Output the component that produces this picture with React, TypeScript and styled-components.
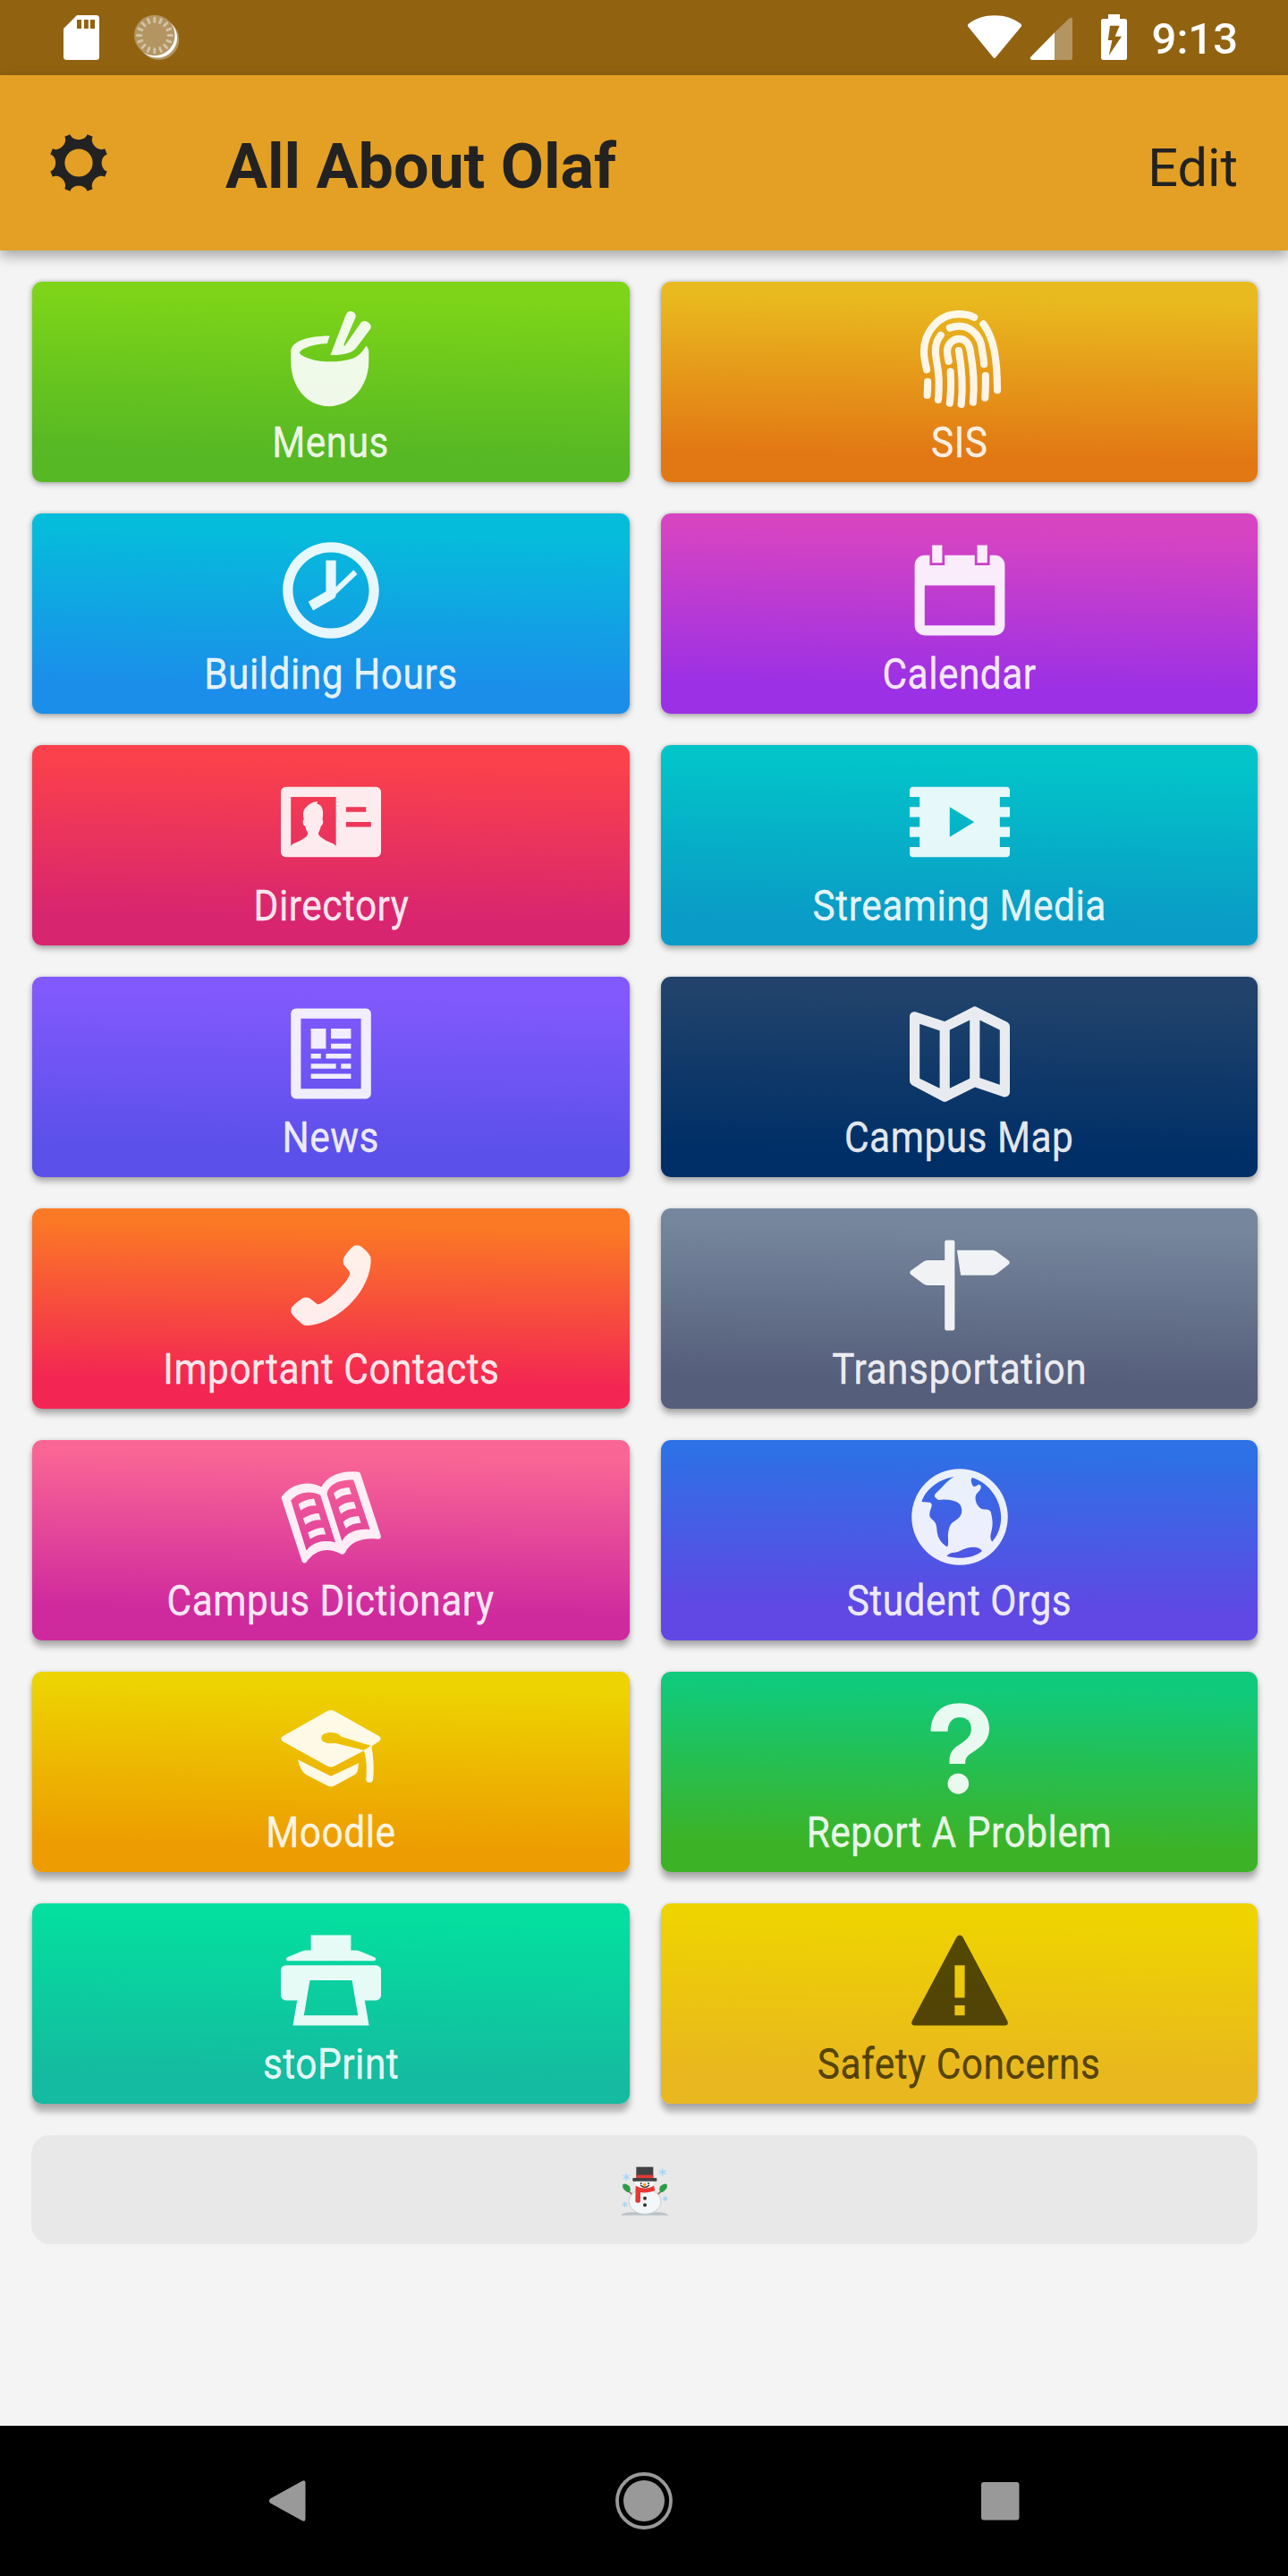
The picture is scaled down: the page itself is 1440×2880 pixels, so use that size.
import React from 'react';
import styled, { createGlobalStyle } from 'styled-components';

const GlobalStyle = createGlobalStyle`
  *, *::before, *::after { box-sizing: border-box; }
  body { margin: 0; background: #f4f4f4; font-family: Roboto, "Liberation Sans", sans-serif; }
`;

const Screen = styled.div`
  display: flex;
  flex-direction: column;
  width: 1440px;
  height: 2880px;
  overflow: hidden;
  background: #f4f4f4;
`;

const StatusBar = styled.div`
  display: flex;
  justify-content: space-between;
  flex: none;
  height: 84px;
  padding: 0 56px 0 70px;
  background: #916311;
  color: #fff;
`;

const StatusGroup = styled.div`
  display: flex;
  align-items: flex-start;
`;

const StatusIcon = styled.svg<{ $before?: number }>`
  display: block;
  flex: none;
  margin-top: 16px;
  margin-left: ${(p) => p.$before ?? 0}px;
`;

const Clock = styled.span`
  margin-left: 27px;
  margin-top: 15px;
  font-size: 49px;
  line-height: 58px;
  font-weight: 500;
`;

const Header = styled.header`
  display: flex;
  align-items: center;
  flex: none;
  height: 196px;
  padding: 0 56px 0 55px;
  background: #e4a024;
  color: #222;
  box-shadow: 0 6px 14px rgba(0, 0, 0, 0.33);
  z-index: 1;
`;

const GearIcon = styled.svg`
  display: block;
  flex: none;
  margin-bottom: 1px;
`;

const Title = styled.h1`
  flex: 1;
  margin: 8px 0 0 131px;
  font-size: 70px;
  line-height: 82px;
  font-weight: 700;
`;

const EditButton = styled.button`
  margin: 11px 0 0;
  padding: 0;
  border: 0;
  background: none;
  color: #222;
  font-family: inherit;
  font-size: 59.5px;
  line-height: 70px;
`;

const Content = styled.main`
  display: flex;
  flex-direction: column;
  gap: 35px;
  flex: 1;
  padding: 35px 34px 0 36px;
`;

const Grid = styled.div`
  display: grid;
  grid-template-columns: 668px 667px;
  grid-auto-rows: 224px;
  gap: 35px;
`;

const Tile = styled.button<{ $from: string; $to: string; $drop: number; $dark?: boolean }>`
  display: flex;
  flex-direction: column;
  align-items: center;
  padding: 30px 0 0;
  border: 0;
  border-radius: 11px;
  background: linear-gradient(181deg, ${(p) => p.$from} 10%, ${(p) => p.$to} 85%);
  box-shadow: 0 ${(p) => p.$drop}px 7px rgba(0, 0, 0, 0.28), 0 0 5px rgba(0, 0, 0, 0.14);
  color: ${(p) => (p.$dark ? 'rgba(0, 0, 0, 0.65)' : 'rgba(255, 255, 255, 0.9)')};
  font-family: inherit;
`;

const TileIcon = styled.svg`
  display: block;
  flex: none;
  fill: currentColor;
`;

const TileLabel = styled.span`
  margin-top: 9px;
  font-size: 49px;
  line-height: 58px;
  letter-spacing: 0.6px;
  white-space: nowrap;
  transform: scaleX(0.865);
  -webkit-text-stroke: 0.35px currentColor;
`;

const SnowButton = styled.button`
  display: flex;
  justify-content: center;
  align-items: center;
  height: 122px;
  margin-left: -1px;
  padding: 4px 0 0;
  border: 0;
  border-radius: 21px;
  background: #e8e8e8;
`;

const NavBar = styled.nav`
  display: flex;
  justify-content: center;
  align-items: center;
  gap: 334px;
  flex: none;
  height: 168px;
  padding-right: 1px;
  background: #000;
`;

const NavIcon = styled.svg`
  display: block;
  fill: #999;
`;

const polar = (r: number, deg: number) => {
  const a = (deg * Math.PI) / 180;
  return `${(r * Math.sin(a)).toFixed(2)} ${(-r * Math.cos(a)).toFixed(2)}`;
};

const gearPath = () => {
  let d = '';
  for (let k = 0; k < 8; k += 1) {
    const a = k * 45;
    d += `${k === 0 ? 'M' : 'L'}${polar(33.1, a - 16.8)}`;
    d += `C${polar(24.7, a - 16)} ${polar(24.7, a + 16)} ${polar(33.1, a + 16.8)}`;
  }
  return `${d}ZM0 -15.6A15.6 15.6 0 1 0 0 15.6A15.6 15.6 0 1 0 0 -15.6Z`;
};

const icons: Record<string, React.ReactNode> = {
  bowl: (
    <>
      <path d="M9.75 5.45C5 5.5 2 6.6 2 8.6V10.5C2 15.4 5 19.5 9.6 19.5S17.55 15.4 17.55 10.5V8.6Q17.5 7.9 17.05 7.4C16 9.1 15.2 9.6 14.2 10C12.9 10.4 11.5 10.6 9.7 10.6C6.3 10.6 3.75 9.4 3.75 8.8S6 7.05 9.25 6.95Z" />
      <path d="M9.9 9.3L13 1.2C13.3.4 14 .4 14.5.7Q15.1 1.1 14.9 1.8L12.6 7.1L12.65 7.6L15.8 3.1C16.2 2.3 17.1 2.4 17.6 2.9Q18.2 3.4 17.9 4L15.3 7.5C14.4 8.8 13 9.3 9.9 9.3Z" />
    </>
  ),
  fingerprint: (
    <g fill="none" stroke="currentColor" strokeWidth="1.45" strokeLinecap="round">
      <path d="M12.9 1.75C11.9 1.25 10.8 1.1 9.8 1.1C5.5 1.1 2.85 5 2.85 8.6C2.85 10.2 3.3 11.4 3.4 12.2" />
      <path d="M3.6 14.6Q3.62 16 3.5 17.3" />
      <path d="M14.7 3.1C16.8 5.8 17.5 10 17.5 16.3" />
      <path d="M6.2 5.3C5.5 6.2 5.15 7.3 5.15 8.4C5.15 10.2 5.85 12 5.85 14.8Q5.85 16.8 5.7 18.2" />
      <path d="M8 3.85C11.7 2.6 14.3 5.2 14.5 8.5Q14.8 10 14.85 11.1" />
      <path d="M15.15 13.4Q15.2 15.6 15.05 17.8" />
      <path d="M7.8 10.5C7.6 9.6 7.5 9.1 7.5 8.5C7.5 7.1 8.6 6.05 9.85 6.05C11.2 6.05 11.9 7.1 12.1 8.4C12.9 12.7 12.95 15.8 12.65 18.7" />
      <path d="M8.15 12.6Q8.35 16 8 18.9" />
      <path d="M9.8 8.4C10.5 12.3 10.7 15.5 10.3 19.1" />
    </g>
  ),
  clock: (
    <path d="M10 .4c-5.303 0-9.601 4.298-9.601 9.6 0 5.303 4.298 9.601 9.601 9.601 5.302 0 9.6-4.298 9.6-9.601C19.6 4.698 15.301.4 10 .4zm0 17.199c-4.197 0-7.6-3.402-7.6-7.6 0-4.197 3.402-7.6 7.6-7.6 4.197 0 7.601 3.402 7.601 7.6 0 4.198-3.404 7.6-7.601 7.6zM11 9.33V4H9v6.245l-3.546 2.048 1 1.732 4.115-2.377A.955.955 0 0 0 11 10.964v-.168l4.24-4c-.217-.309-.457-.6-.725-.869L11 9.33z" />
  ),
  calendar: (
    <path
      fillRule="evenodd"
      d="M1 5A2 2 0 0 1 3 3H4V5H7V3H13V5H16V3H17A2 2 0 0 1 19 5V17A2 2 0 0 1 17 19H3A2 2 0 0 1 1 17ZM3 9V17H17V9ZM4.5 1H6.5V4.5H4.5ZM13.5 1H15.5V4.5H13.5Z"
    />
  ),
  card: (
    <path
      fillRule="evenodd"
      d="M1 3H19A1 1 0 0 1 20 4V16A1 1 0 0 1 19 17H1A1 1 0 0 1 0 16V4A1 1 0 0 1 1 3ZM2 5V14.8C2.3 14.3 3.1 14.1 3.9 13.7C4.8 13.2 5.5 12.7 5.4 12.2C5.1 11.7 5 11.4 4.85 10.8C4.5 10.7 4.4 10.4 4.4 9.8L4.6 9.4C4.3 8.3 4.5 7.6 5 7.1C5.7 6.5 6.2 5.9 7.4 5.95L7.15 6.35C8 6.5 8.35 7.2 8.4 8Q8.45 8.7 8.3 9.5L8.45 9.8C8.45 10.3 8.3 10.6 8 10.8C7.85 11.5 7.75 11.7 7.5 12.2C7.4 12.7 8.2 13.2 9 13.7C9.8 14.1 10.7 14.3 11 14.8V5ZM13 7V8H17V7ZM13 10V11H18V10Z"
    />
  ),
  video: (
    <path
      fillRule="evenodd"
      d="M.7 3H19.3A.7.7 0 0 1 20 3.7V5H18V7H20V9H18V11H20V13H18V15H20V16.3A.7.7 0 0 1 19.3 17H.7A.7.7 0 0 1 0 16.3V15H2V13H0V11H2V9H0V7H2V5H0V3.7A.7.7 0 0 1 .7 3ZM8 7V13L12.9 10Z"
    />
  ),
  news: (
    <path
      fillRule="evenodd"
      d="M3 1H17A1 1 0 0 1 18 2V18A1 1 0 0 1 17 19H3A1 1 0 0 1 2 18V2A1 1 0 0 1 3 1ZM4 3V17H16V3ZM6 5H9V9H6ZM10 5H14V7H10ZM10 8H14V9H10ZM6 10H8V11H6ZM9 10H14V11H9ZM6 12H11V13H6ZM12 12H14V13H12ZM6 14H14V15H6Z"
    />
  ),
  map: (
    <path
      fillRule="evenodd"
      d="M0 2.6C0 1.9.6 1.5 1.3 1.7L7 3.55L12.5.75Q13 .4 13.5.75L19.5 3.7Q20 4 20 4.6V17.7C20 18.4 19.3 18.8 18.7 18.6L13.05 16.7L7.5 19.45Q7 19.75 6.5 19.45L.5 16.3Q0 16 0 15.5ZM2 4.05V14.95L6 16.9V5.4ZM8 5.25V16.9L12 14.95V3.3ZM14 3.3V14.8L18 16.2V5.25Z"
    />
  ),
  phone: (
    <path d="M14.6 2.1Q15.2 1.9 15.8 2.1C16.7 2.7 17.5 3.5 17.9 4.3C18.2 5.8 17.6 8.9 15.5 11.8C12.4 16 7.6 18.3 4.7 18Q4.2 17.8 3.8 17.3Q2.7 16.5 2.1 15.6Q1.9 15.2 2.15 14.4C2.8 13.7 3.6 13.1 4.3 12.6Q5 12.2 5.8 12.6L7.3 13.8C8.6 14 13.7 9.2 13.8 7.6C13.6 7 13 6.4 12.5 5.8Q12.3 5 12.6 4.4C13.1 3.6 13.8 2.7 14.6 2.1Z" />
  ),
  direction: (
    <path d="M7.4 1H8.6A.4.4 0 0 1 9 1.4V18.6A.4.4 0 0 1 8.6 19H7.4A.4.4 0 0 1 7 18.6V10H3.6Q3.1 10 2.7 9.7L.2 7.8Q-.1 7.45.2 7.1L2.7 5.3Q3.1 5 3.6 5H7V1.4A.4.4 0 0 1 7.4 1ZM9.45 3H16.5Q17 3 17.4 3.3L19.8 5.1Q20.1 5.45 19.8 5.8L17.4 7.7Q17 8 16.5 8H10.2Z" />
  ),
  book: (
    <path
      fillRule="evenodd"
      d="M.2 6.5Q0 6.2.2 5.9C2.3 3.2 5.6 2.7 8.1 4C9.1 1.9 12 .6 15.3 1Q15.8 1 15.95 1.5L19.98 13.8Q20 14.5 19.3 14.4C16.1 14.1 13.9 15 12.85 17.1Q12.4 17.7 11.9 17.3C9 15.8 6.6 16.8 5.1 19Q4.5 19.5 4.2 18.8ZM2 6.7L5.1 16.7C6.5 14.9 8.7 14.5 10.9 15.1L7.9 5.65C6 4.6 3.4 5 2 6.7ZM9.2 5.4L12.2 14.8C13.2 13 15.2 12.3 17.8 12.5L14.5 2.6C12 2.5 9.6 3.3 9.2 5.4ZM3.5 7.4Q5 6.4 6.65 6.4L7.05 7.75Q5.5 7.6 3.95 8.7ZM4.45 10.27Q5.95 9.27 7.6 9.27L8 10.62Q6.45 10.47 4.9 11.57ZM5.4 13.14Q6.9 12.14 8.55 12.14L8.95 13.49Q7.4 13.34 5.85 14.44ZM10.55 5.25Q11.8 4.1 13.65 4.1L14.1 5.45Q12.4 5.4 11.05 6.55ZM11.5 8.12Q12.75 6.97 14.6 6.97L15.05 8.32Q13.35 8.27 12 9.42ZM12.45 11Q13.7 9.84 15.55 9.84L16 11.19Q14.3 11.14 12.95 12.29Z"
    />
  ),
  globe: (
    <path
      fillRule="evenodd"
      d="M10 .4A9.6 9.6 0 1 1 10 19.6A9.6 9.6 0 1 1 10 .4ZM8.85 1.95C5.7 2.5 3.2 4.5 2.4 6.95L4 7.1Q4.6 7.3 4.35 8C3.9 9.3 3.8 9.9 4.4 10.4C5 10.9 5.3 11.2 5.4 12.2C5.5 14 6 15 7.5 16Q7.8 15.7 7.65 13.9C7.7 12.5 8 11.5 8.7 11C9.8 10.3 10.4 9.8 10.4 8.7C10.4 7.2 9.4 6.6 6.9 6.5L5.7 6.6L5.1 6.1Q4.8 5.7 5.3 5.2C6.4 4.2 7.3 2.9 8.85 1.95ZM12.5 2.15Q12.1 2.6 12.4 3.3C12.7 4.3 13.2 3.9 13.8 3.5Q14.4 3.7 14.2 4.3C14 5 13.4 5 13.15 5.9C13 7 13.7 8.5 15 8.5C15.8 8.5 16.2 8.7 16.3 9.4C16.8 11.4 16.4 12.5 16.15 13.7Q16.1 14.6 16.5 14.9C17.7 13.6 18.25 11.8 18.25 10.1C18.25 6.5 15.8 3.2 12.5 2.15ZM7.4 17.8C9.8 18.5 12.8 18.3 14.45 16.8Q14 15.9 12 16.05C10.4 16.3 10.3 17 8.4 17.15Q7.7 17.4 7.4 17.8Z"
    />
  ),
  cap: (
    <path
      fillRule="evenodd"
      d="M9.2 2.55Q10 2.1 10.8 2.55L19.6 7.5Q20.3 8 19.6 8.55L18.1 9.5C18.5 11.7 18.65 14 18.4 16.2Q18.2 16.8 17.7 16.8Q17.1 16.75 17 16.2C17.2 14 17.1 12 16.6 10.4L10.8 13.45Q10 13.9 9.2 13.45L.4 8.55Q-.3 8 .4 7.5ZM10 6.8C8.8 6.8 8.1 7.2 8.1 7.9C8.1 8.6 8.9 9.1 10.8 8.9L16.6 10.3L17.95 9.4L12 7.6Q11.4 6.8 10 6.8ZM3.4 12.2L10 15.5L15.5 12.9Q15.5 14.7 14.8 15.2L10.7 17.4Q10 17.8 9.3 17.4L5 15.2Q3.8 14.3 3.4 12.2Z"
    />
  ),
  help: (
    <path d="M4.2 6.55C4.3 3 6.4.95 9.95.95C13.5.95 15.9 3 15.9 5.95C15.9 7.7 15 9.1 13.5 10.1C12.1 11.1 11.1 11.4 11.1 12.9V13.05H7.95V12.3C8 10.5 8.9 9.8 10.2 9C11.6 8.1 12.3 7.4 12.3 6C12.3 4.6 11.4 3.75 10 3.75C8.5 3.75 7.65 4.8 7.6 6.55ZM9.7 14.95A2.1 2.05 0 1 1 9.7 19.05A2.1 2.05 0 1 1 9.7 14.95Z" />
  ),
  print: (
    <path
      fillRule="evenodd"
      d="M6 1H14V4H14.9Q15.4 4 15.8 4.2L18.6 5.35Q19 5.5 18.95 5.85Q18.9 6.1 18.6 6.1H1.4Q1.1 6.1 1.05 5.85Q1 5.5 1.4 5.35L4.2 4.2Q4.6 4 5.1 4H6ZM1 7H19A1 1 0 0 1 20 8V13A1 1 0 0 1 19 14H16.75L17.6 19H2.4L3.25 14H1A1 1 0 0 1 0 13V8A1 1 0 0 1 1 7ZM5.8 10L4.6 17H15.4L14.2 10Z"
    />
  ),
  warning: (
    <path
      fillRule="evenodd"
      d="M19.5 18.1L10.6 1.35Q10 .65 9.4 1.35L.5 18.1Q.1 19 .95 19H19.05Q19.9 19 19.5 18.1ZM11 17H9V15H11ZM11 13.5H9V7H11Z"
    />
  ),
};

const tiles = [
  { label: 'Menus', icon: 'bowl', from: '#7dd418', to: '#56b824' },
  { label: 'SIS', icon: 'fingerprint', from: '#e9ba1f', to: '#e27814' },
  { label: 'Building Hours', icon: 'clock', from: '#05bddb', to: '#1b8eea' },
  { label: 'Calendar', icon: 'calendar', from: '#d744c2', to: '#9c30e5' },
  { label: 'Directory', icon: 'card', from: '#fb414b', to: '#d8256f' },
  { label: 'Streaming Media', icon: 'video', from: '#02c4c9', to: '#0a9cc6' },
  { label: 'News', icon: 'news', from: '#8259fd', to: '#5b50ea' },
  { label: 'Campus Map', icon: 'map', from: '#21436b', to: '#002f67' },
  { label: 'Important Contacts', icon: 'phone', from: '#fb7924', to: '#f32653' },
  { label: 'Transportation', icon: 'direction', from: '#76879d', to: '#555e7b' },
  { label: 'Campus Dictionary', icon: 'book', from: '#f96595', to: '#cf299e' },
  { label: 'Student Orgs', icon: 'globe', from: '#2e70e5', to: '#6147e4' },
  { label: 'Moodle', icon: 'cap', from: '#edd301', to: '#ed9d01' },
  { label: 'Report A Problem', icon: 'help', from: '#10ca7b', to: '#3cb327' },
  { label: 'stoPrint', icon: 'print', from: '#04de9f', to: '#14bba0' },
  { label: 'Safety Concerns', icon: 'warning', from: '#eed301', to: '#e9b71f', dark: true },
];

const ticks = Array.from({ length: 16 }, (_, i) => i * 22.5);

const Snowman = () => (
  <svg width="56" height="56" viewBox="158 127 168 168" aria-hidden="true">
    <path d="M161 291Q166 284 194 281H290Q315 284 322 291Z" fill="#b9c3c8" />
    <g stroke="#a9d3f5" strokeWidth="4">
      <path d="M180 151V175M169 157L191 169M169 169L191 157" />
      <path d="M301 135V159M289 141L313 153M289 153L313 141" />
      <path d="M175 246V263M167 250L183 259M167 259L183 250" />
      <path d="M310 227V243M303 231L317 239M303 239L317 231" />
    </g>
    <path d="M186 209L206 228M298 209L278 228" stroke="#8d6e63" strokeWidth="5" />
    <path d="M168 188Q176 182 185 190Q194 193 193 207Q191 217 182 213Q164 202 168 188Z" fill="#2e9b46" />
    <path d="M316 188Q308 182 299 190Q290 193 291 207Q293 217 302 213Q320 202 316 188Z" fill="#2e9b46" />
    <ellipse cx="242" cy="245" rx="54" ry="42" fill="#f4f7f8" stroke="#c5ced3" strokeWidth="3" />
    <ellipse cx="241" cy="185" rx="30" ry="25" fill="#fafafa" />
    <path d="M213 129H270V166H213Z" fill="#424242" />
    <path d="M213 156H270V168H213Z" fill="#e53935" />
    <rect x="201" y="166" width="81" height="11" rx="2" fill="#424242" />
    <circle cx="229" cy="184" r="3" fill="#333" />
    <circle cx="254" cy="184" r="3" fill="#333" />
    <path d="M227 190Q242 204 257 190" fill="none" stroke="#333" strokeWidth="4" />
    <circle cx="241" cy="188" r="5" fill="#ff8f00" />
    <path d="M211 192Q242 209 272 192L276 208Q252 218 227 214V244Q227 249 220 249Q210 249 210 243Z" fill="#e53935" />
    <circle cx="242" cy="234" r="6" fill="#333" />
    <circle cx="242" cy="257" r="6" fill="#333" />
  </svg>
);

export default function App() {
  return (
    <>
      <GlobalStyle />
      <Screen>
        <StatusBar>
          <StatusGroup>
            <StatusIcon width="42" height="52" viewBox="70 16 42 52">
              <path
                fill="#fff"
                fillRule="evenodd"
                d="M86 17H107.5Q111 17 111 20.500V63.500Q111 67 107.500 67H74.500Q71 67 71 63.500V32ZM86 22V32H91V22ZM94 22V32H98.800V22ZM101 22V32H106V22Z"
              />
            </StatusIcon>
            <StatusIcon $before={37} width="52" height="52" viewBox="149 16 52 52">
              <circle cx="177.500" cy="44.300" r="22.700" fill="#b39562" />
              <circle cx="175.800" cy="42.300" r="22.300" fill="#fff" />
              <circle cx="172.800" cy="39.500" r="22.700" fill="#b39562" />
              <g transform="translate(172.8 39.5)" stroke="#d2c3a6" strokeWidth="3" strokeLinecap="round">
                {ticks.map((a) => (
                  <path key={a} d="M0 -15.200V-19.500" transform={`rotate(${a})`} />
                ))}
              </g>
            </StatusIcon>
          </StatusGroup>
          <StatusGroup>
            <StatusIcon width="62" height="52" viewBox="1081 16 62 52">
              <path fill="#fff" d="M1082.500 30Q1081 28 1083 26.500C1098 14 1126 14 1141 26.500Q1143 28 1141.500 30L1113.300 64Q1111.800 66 1110.300 64Z" />
            </StatusIcon>
            <StatusIcon $before={8} width="49" height="52" viewBox="1151 16 49 52">
              <path fill="#b39562" d="M1195 21Q1199 18 1199 22V65Q1199 67 1197 67H1179V36.500Z" />
              <path fill="#fff" d="M1179 36.500V67H1153.500Q1150.500 66 1152.500 63.500Z" />
            </StatusIcon>
            <StatusIcon $before={30} width="31" height="52" viewBox="1230 16 31 52">
              <path
                fill="#fff"
                fillRule="evenodd"
                d="M1239 16H1252V21H1257.500Q1260 21 1260 23.500V64.500Q1260 67 1257.500 67H1233.500Q1231 67 1231 64.500V23.500Q1231 21 1233.500 21H1239ZM1241 28.700L1238.800 45H1243.400L1239.700 62L1254 40.700H1246.600L1251.700 28.700Z"
              />
            </StatusIcon>
            <Clock>9:13</Clock>
          </StatusGroup>
        </StatusBar>

        <Header>
          <GearIcon width="66" height="66" viewBox="-33 -33 66 66" aria-label="Settings">
            <path d={gearPath()} fill="#222" fillRule="evenodd" />
          </GearIcon>
          <Title>All About Olaf</Title>
          <EditButton>Edit</EditButton>
        </Header>

        <Content>
          <Grid>
            {tiles.map((t, i) => (
              <Tile key={t.label} $from={t.from} $to={t.to} $dark={t.dark} $drop={2 + Math.floor(i / 2)}>
                <TileIcon width="112" height="112" viewBox="0 0 20 20">
                  {icons[t.icon]}
                </TileIcon>
                <TileLabel>{t.label}</TileLabel>
              </Tile>
            ))}
          </Grid>
          <SnowButton>
            <Snowman />
          </SnowButton>
        </Content>

        <NavBar>
          <NavIcon width="64" height="64" viewBox="0 0 64 64">
            <path d="M12.700 34Q10 31.500 12.700 29L48 9.500Q52 7.500 52 11.500V51.500Q52 55.500 48 53.500Z" transform="translate(-.5 .5)" />
          </NavIcon>
          <NavIcon width="64" height="64" viewBox="0 0 64 64">
            <circle cx="32" cy="32" r="30" fill="none" stroke="#999" strokeWidth="3.800" />
            <circle cx="32" cy="32" r="23" />
          </NavIcon>
          <NavIcon width="64" height="64" viewBox="0 0 64 64">
            <rect x="11" y="11" width="42.500" height="42.500" rx="3" />
          </NavIcon>
        </NavBar>
      </Screen>
    </>
  );
}
